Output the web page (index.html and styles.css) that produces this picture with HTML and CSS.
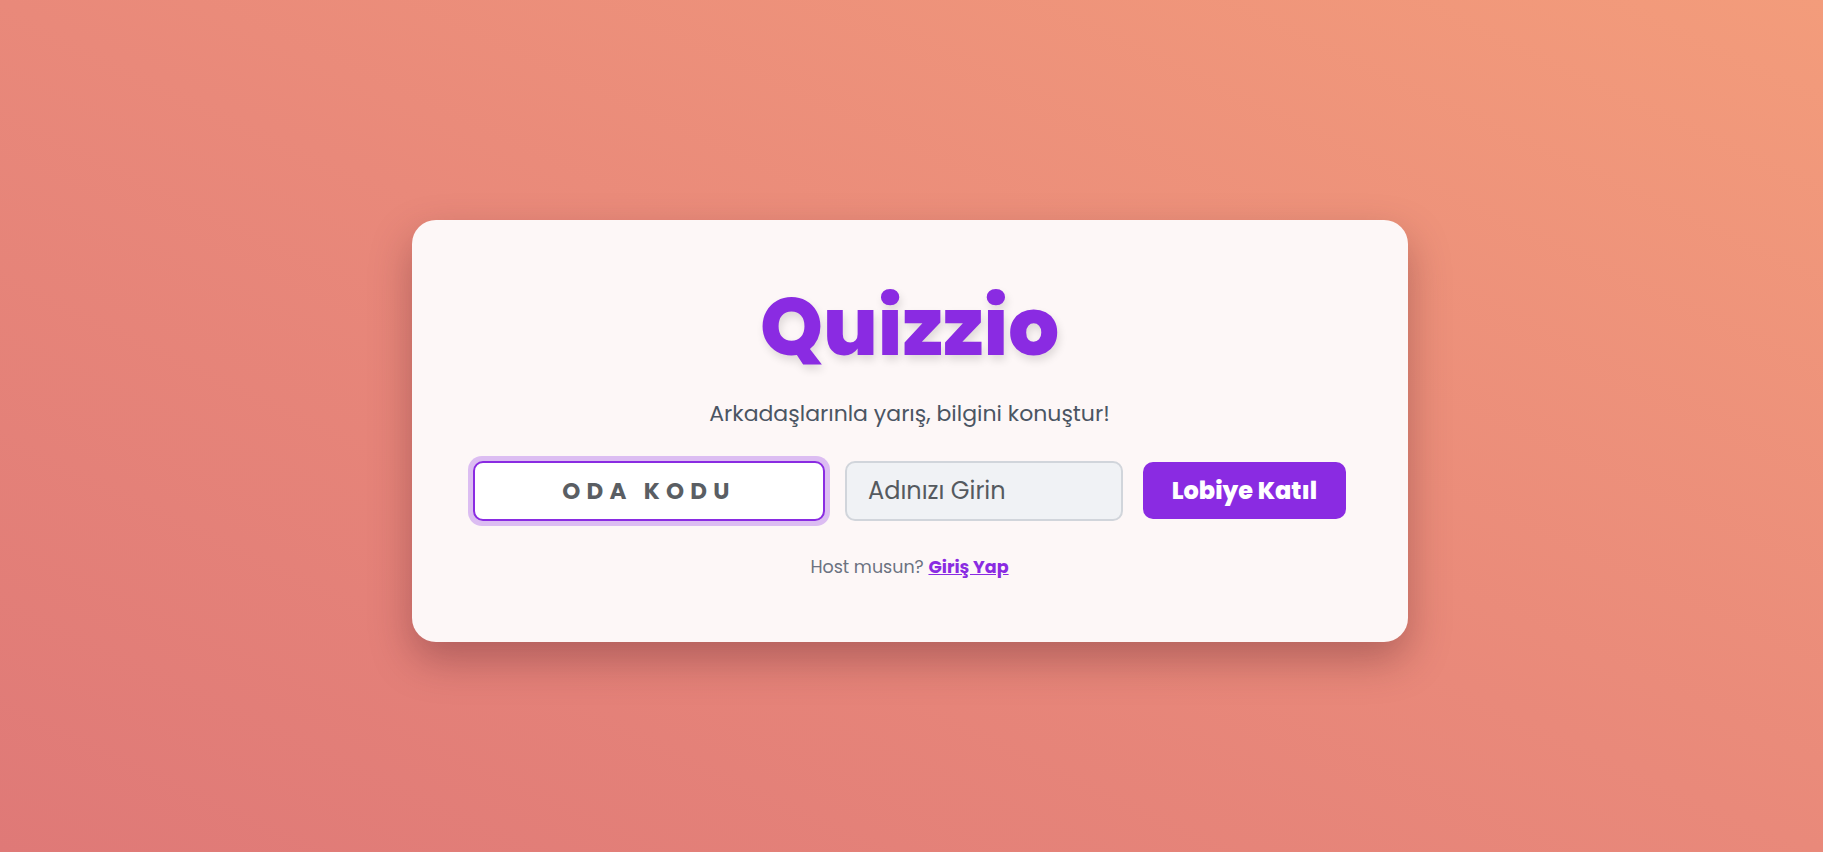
FILE: index.html
```html
<!DOCTYPE html>
<html lang="tr">
<head>
<meta charset="utf-8">
<title>Quizzio</title>
<link rel="stylesheet" href="styles.css">
</head>
<body>
<main class="card">
  <h1 class="title">Quizzio</h1>
  <p class="subtitle">Arkadaşlarınla yarış, bilgini konuştur!</p>
  <form class="join-row">
    <div class="code-wrap"><input class="code-input" type="text" placeholder="ODA KODU" autofocus></div>
    <input class="name-input" type="text" placeholder="Adınızı Girin">
    <button class="join-btn" type="button">Lobiye Katıl</button>
  </form>
  <p class="host">Host musun? <a href="#" class="host-link">Giriş Yap</a></p>
</main>
</body>
</html>
```

FILE: styles.css
```css
* { box-sizing: border-box; }
html, body { height: 100%; }
body {
  margin: 0;
  font-family: "Poppins", "Open Sans", sans-serif;
  background: linear-gradient(to top right, #df7977 0%, #e9897a 50%, #f39c7b 100%);
  display: flex;
  align-items: center;
  justify-content: center;
  padding-top: 10px;
  padding-right: 4px;
}
.card {
  width: 996px;
  height: 422px;
  background: #fdf7f7;
  border-radius: 24px;
  box-shadow: 0 18px 40px rgba(80, 30, 40, 0.35);
  display: flex;
  flex-direction: column;
  align-items: center;
  padding-top: 67px;
}
.title {
  margin: 0;
  font-size: 80px;
  font-weight: 800;
  line-height: 1;
  color: #8a2be2;
  text-shadow: 2px 5px 8px rgba(0, 0, 0, 0.12);
}
.subtitle {
  margin: 33px 0 0;
  font-size: 22px;
  line-height: 1.3;
  color: #4b5563;
}
.join-row {
  margin-top: 32px;
  display: flex;
  align-items: center;
  gap: 20px;
}
.code-wrap {
  padding: 5px;
  margin: -5px;
  border-radius: 14px;
  background: #dcbdf2;
}
.code-input {
  display: block;
  width: 352px;
  height: 60px;
  border: 2px solid #8a2be2;
  border-radius: 10px;
  background: #fff;
  font-family: inherit;
  font-size: 23px;
  font-weight: 700;
  letter-spacing: 0.27em;
  text-align: center;
  color: #5a5e63;
  outline: none;
  caret-color: #222;
}
.code-input::placeholder { color: #5a5e63; opacity: 1; }
.name-input {
  width: 278px;
  height: 60px;
  border: 2px solid #d1d5db;
  border-radius: 10px;
  background: #f0f2f5;
  padding: 0 21px;
  font-family: inherit;
  font-size: 24px;
  color: #555;
  outline: none;
}
.name-input::placeholder { color: #555a5f; opacity: 1; }
.join-btn {
  width: 203px;
  height: 57px;
  border: none;
  border-radius: 10px;
  background: #8a2be2;
  color: #fff;
  font-family: inherit;
  font-size: 24px;
  font-weight: 800;
  cursor: pointer;
}
.host {
  margin: 33px 0 0;
  font-size: 17.5px;
  line-height: 1.5;
  color: #6b7280;
}
.host-link {
  color: #8a2be2;
  font-weight: 700;
  text-decoration: underline;
}
```
